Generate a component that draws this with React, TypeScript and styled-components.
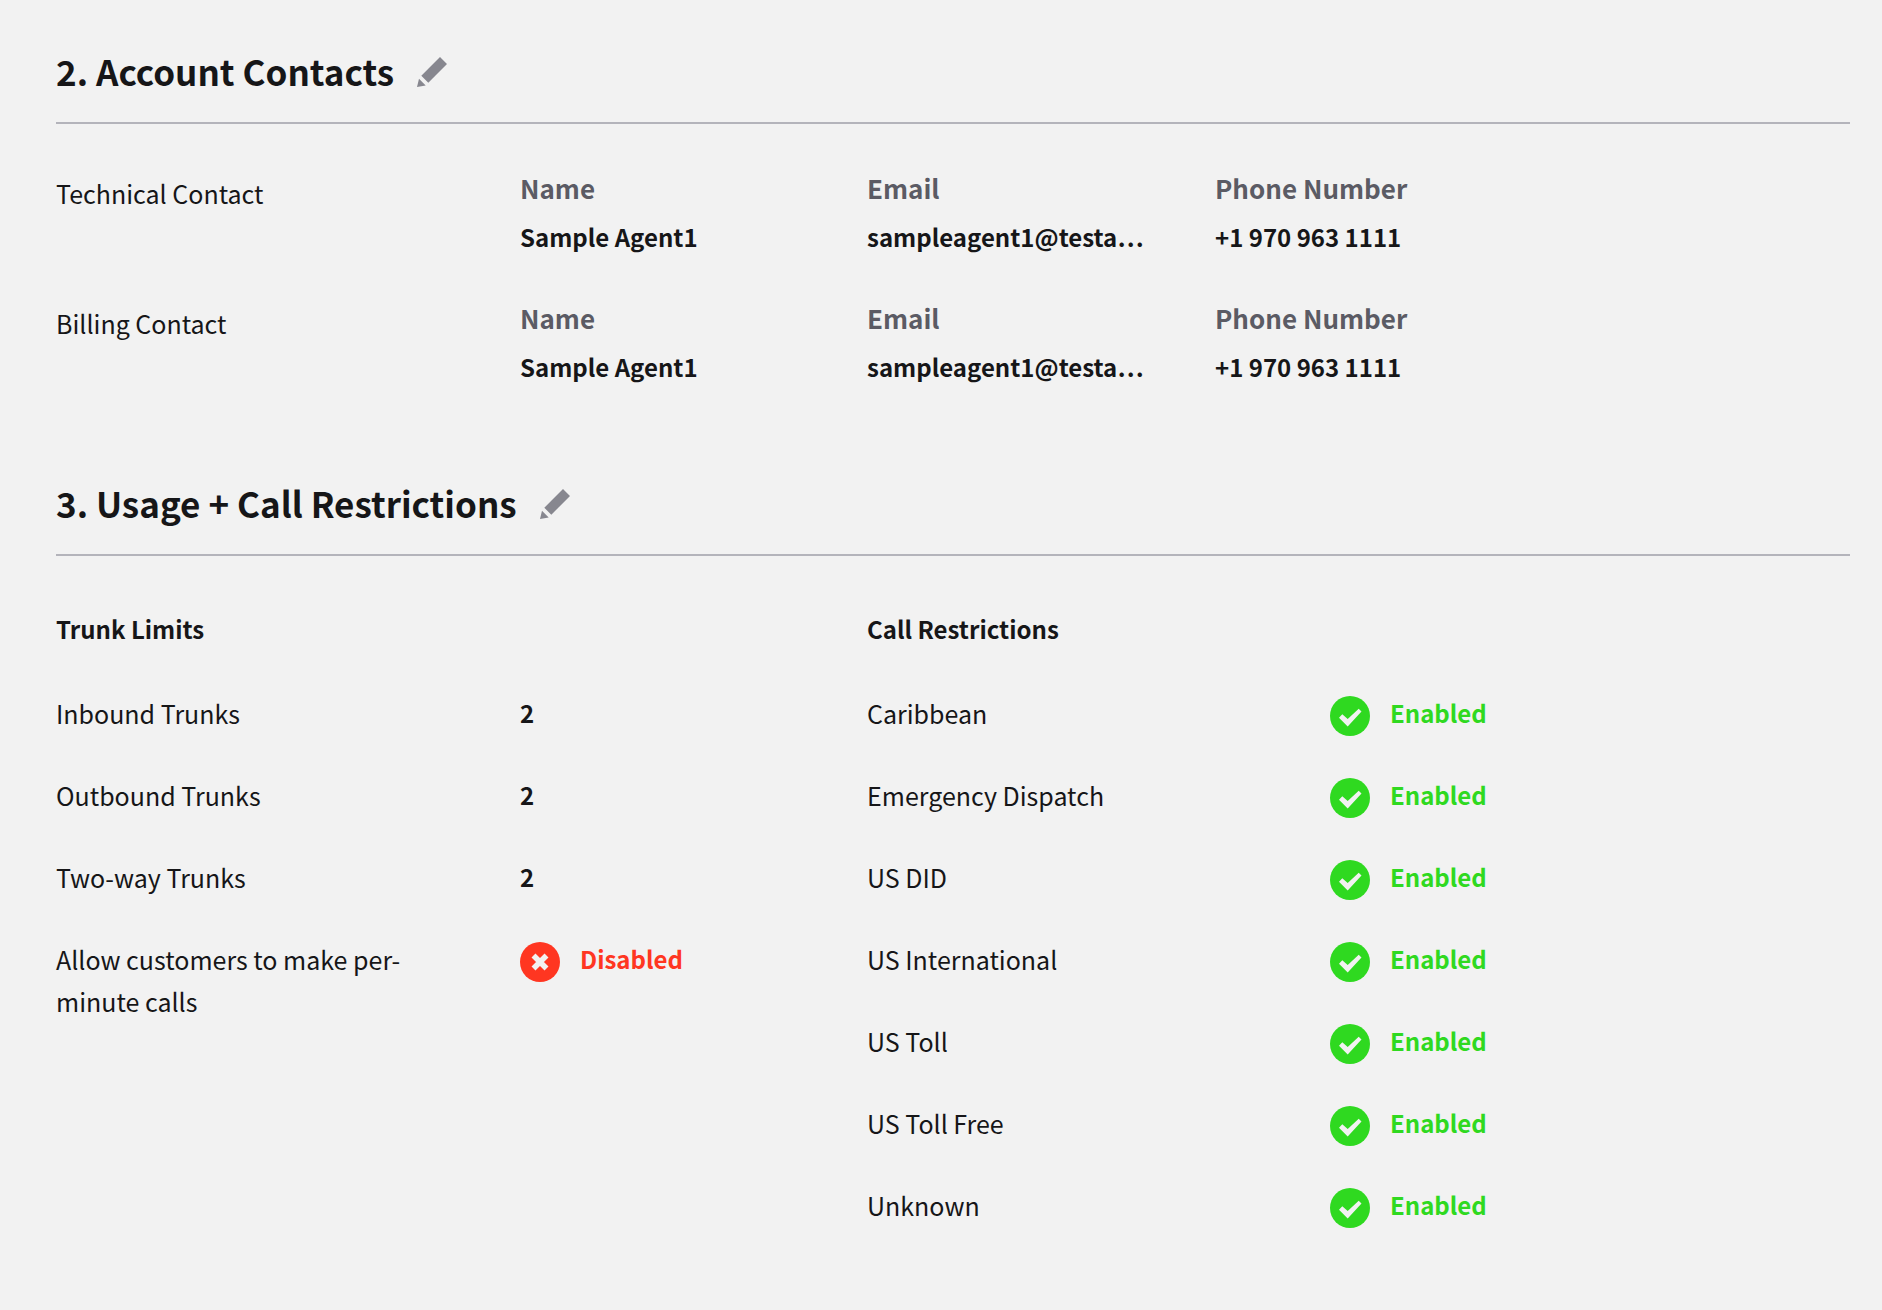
import React from 'react';
import styled, { createGlobalStyle } from 'styled-components';

const Global = createGlobalStyle`
  *, *::before, *::after { box-sizing: border-box; }
  body { margin: 0; background: #f2f2f2; }
`;

const Page = styled.main`
  padding: 37px 32px 64px 56px;
  color: #161618;
  font-family: "Noto Sans CJK KR", "Open Sans", sans-serif;
  font-size: 25px;
  line-height: 42px;
`;

const Section = styled.section`
  & + & { margin-top: 81px; }
`;

const SectionHead = styled.header`
  display: flex;
  align-items: center;
  gap: 23px;
  padding-bottom: 17px;
  border-bottom: 2px solid #b4b4bb;
`;

const Title = styled.h2`
  margin: 0;
  font-size: 35px;
  font-weight: 700;
  line-height: 68px;
`;

const EditButton = styled.button`
  display: flex;
  padding: 2px 0 0;
  border: 0;
  background: none;
  color: #87878f;
  cursor: pointer;
`;

const Contacts = styled.div`
  display: grid;
  gap: 39px;
  margin-top: 43px;
`;

const ContactRow = styled.div`
  display: grid;
  grid-template-columns: 464fr 347fr 348fr 635fr;
`;

const ContactLabel = styled.h3`
  margin: 0;
  padding-top: 5px;
  font-size: 25px;
  font-weight: 400;
`;

const Fields = styled.dl`
  display: grid;
  grid-column: 2 / -1;
  grid-template-columns: subgrid;
  margin: 0;
`;

const Field = styled.div`
  display: grid;
  align-content: start;
  gap: 7px;
  min-width: 0;
`;

const FieldName = styled.dt`
  color: #5b5b64;
  font-size: 26px;
  font-weight: 700;
`;

const FieldValue = styled.dd`
  margin: 0;
  font-size: 24px;
  font-weight: 700;
  white-space: nowrap;
`;

const Groups = styled.div`
  display: grid;
  grid-template-columns: 464fr 347fr 463fr 520fr;
  margin-top: 52px;
`;

const Group = styled.section`
  display: grid;
  grid-column: span 2;
  grid-template-columns: subgrid;
  align-content: start;
  row-gap: 38px;
`;

const GroupTitle = styled.h3`
  grid-column: 1 / -1;
  margin: 0 0 4px;
  font-size: 24px;
  font-weight: 700;
`;

const Setting = styled.div`
  display: grid;
  grid-column: 1 / -1;
  grid-template-columns: subgrid;
  align-items: start;
  min-height: 44px;
`;

const SettingLabel = styled.div`
  padding-right: 56px;
`;

const SettingValue = styled.div`
  font-size: 24px;
  font-weight: 700;
`;

const StatusBox = styled.div<{ $on: boolean }>`
  display: flex;
  align-items: flex-start;
  gap: 20px;
  color: ${(p) => (p.$on ? '#2fd920' : '#ff3621')};
  font-size: 24px;
  font-weight: 700;

  svg {
    flex: none;
    margin-top: 4px;
  }
`;

const PencilIcon = () => (
  <svg width="30" height="30" viewBox="0 0 30 30" fill="currentColor" aria-hidden="true">
    <path d="M23 0 30 7 11.300 25.700 4.300 18.700ZM2 21.700 8.700 28.500 0 30Z" />
  </svg>
);

const CheckIcon = () => (
  <svg width="40" height="40" viewBox="0 0 40 40" aria-hidden="true">
    <circle cx="20" cy="20" r="20" fill="currentColor" />
    <path d="M9 21.700 12.300 18.300 17.700 23 28.700 12.800 31.500 15.500 17.700 30.500Z" fill="#f2f2f2" />
  </svg>
);

const CrossIcon = () => (
  <svg width="40" height="40" viewBox="0 0 40 40" aria-hidden="true">
    <circle cx="20" cy="20" r="20" fill="currentColor" />
    <path d="M13.500 13.500 26.500 26.500M26.500 13.500 13.500 26.500" stroke="#f2f2f2" strokeWidth="5.600" />
  </svg>
);

const Status = ({ on }: { on: boolean }) => (
  <StatusBox $on={on}>
    {on ? <CheckIcon /> : <CrossIcon />}
    <span>{on ? 'Enabled' : 'Disabled'}</span>
  </StatusBox>
);

const SectionHeading = ({ children }: { children: string }) => (
  <SectionHead>
    <Title>{children}</Title>
    <EditButton type="button" aria-label={`Edit ${children}`}>
      <PencilIcon />
    </EditButton>
  </SectionHead>
);

const contact = [
  { name: 'Name', value: 'Sample Agent1' },
  { name: 'Email', value: 'sampleagent1@testa…' },
  { name: 'Phone Number', value: '+1 970 963 1111' },
];

const contacts = [
  { label: 'Technical Contact', fields: contact },
  { label: 'Billing Contact', fields: contact },
];

const trunks = [
  { label: 'Inbound Trunks', value: 2 },
  { label: 'Outbound Trunks', value: 2 },
  { label: 'Two-way Trunks', value: 2 },
];

const restrictions = [
  'Caribbean',
  'Emergency Dispatch',
  'US DID',
  'US International',
  'US Toll',
  'US Toll Free',
  'Unknown',
];

export default function App() {
  return (
    <Page>
      <Global />
      <Section>
        <SectionHeading>2. Account Contacts</SectionHeading>
        <Contacts>
          {contacts.map((c) => (
            <ContactRow key={c.label}>
              <ContactLabel>{c.label}</ContactLabel>
              <Fields>
                {c.fields.map((f) => (
                  <Field key={f.name}>
                    <FieldName>{f.name}</FieldName>
                    <FieldValue>{f.value}</FieldValue>
                  </Field>
                ))}
              </Fields>
            </ContactRow>
          ))}
        </Contacts>
      </Section>
      <Section>
        <SectionHeading>3. Usage + Call Restrictions</SectionHeading>
        <Groups>
          <Group>
            <GroupTitle>Trunk Limits</GroupTitle>
            {trunks.map((t) => (
              <Setting key={t.label}>
                <SettingLabel>{t.label}</SettingLabel>
                <SettingValue>{t.value}</SettingValue>
              </Setting>
            ))}
            <Setting>
              <SettingLabel>Allow customers to make per-minute calls</SettingLabel>
              <Status on={false} />
            </Setting>
          </Group>
          <Group>
            <GroupTitle>Call Restrictions</GroupTitle>
            {restrictions.map((label) => (
              <Setting key={label}>
                <SettingLabel>{label}</SettingLabel>
                <Status on />
              </Setting>
            ))}
          </Group>
        </Groups>
      </Section>
    </Page>
  );
}
